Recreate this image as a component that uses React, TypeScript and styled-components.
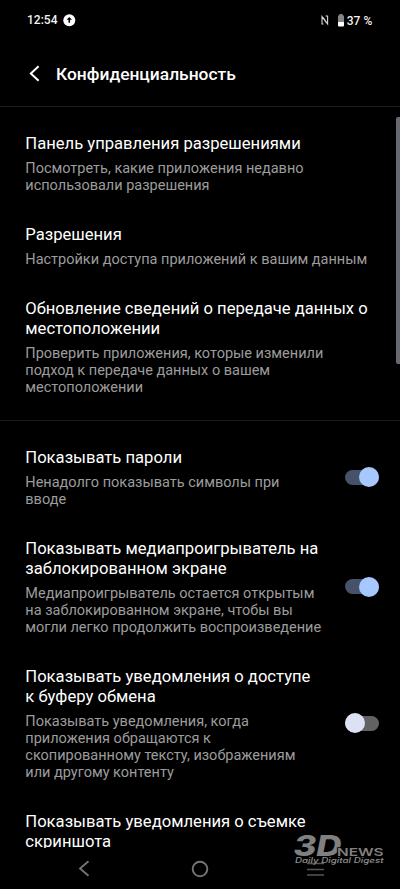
import React from "react";
import styled, { createGlobalStyle } from "styled-components";

const Global = createGlobalStyle`
  *, *::before, *::after { box-sizing: border-box; }
  html, body { margin: 0; padding: 0; background: #000; overflow: hidden; }
`;

const Screen = styled.main`
  position: relative;
  display: flex;
  flex-direction: column;
  width: 400px;
  height: 889px;
  overflow: hidden;
  background: #000;
  color: #fff;
  font-family: Roboto, "Noto Sans", sans-serif;
`;

const StatusBar = styled.div`
  display: flex;
  align-items: center;
  height: 40px;
  padding: 0 27.5px 0 27px;
  color: #f2f2f2;
  font-size: 12px;
  font-weight: 500;
  svg { display: block; }
`;

const Clock = styled.span`
  margin-right: 6px;
`;

const StatusIcons = styled.div`
  display: flex;
  align-items: center;
  margin-left: auto;
`;

const BatteryText = styled.span`
  margin-left: 3px;
  padding-top: 1px;
  letter-spacing: 0.1px;
  white-space: nowrap;
`;

const Header = styled.header`
  display: flex;
  align-items: center;
  gap: 16px;
  flex: none;
  height: 67px;
  padding-left: 29px;
  border-bottom: 1px solid #1c1c1c;
  svg { display: block; }
`;

const PageTitle = styled.h1`
  margin: 0;
  padding-top: 1px;
  font-size: 17.4px;
  font-weight: 500;
  line-height: 20px;
`;

const Content = styled.div`
  flex: none;
  height: 741px;
  overflow: hidden;
`;

const Section = styled.section<{ $divided?: boolean }>`
  display: flex;
  flex-direction: column;
  gap: 31.1px;
  padding: 26.5px 21px 24.1px 25.3px;
  border-bottom: ${(p) => (p.$divided ? "1px solid #1c1c1c" : "none")};
`;

const Row = styled.div`
  display: flex;
  align-items: center;
  justify-content: space-between;
`;

const Title = styled.div`
  font-size: 16.62px;
  line-height: 19.6px;
  white-space: pre;
`;

const Summary = styled.div`
  margin-top: 6.7px;
  color: #9c9c9c;
  font-size: 14.5px;
  line-height: 17px;
  white-space: pre;
`;

const Track = styled.div<{ $on: boolean }>`
  display: flex;
  flex: none;
  align-items: center;
  justify-content: ${(p) => (p.$on ? "flex-end" : "flex-start")};
  width: 34px;
  height: 15px;
  margin-bottom: 1.4px;
  border-radius: 8px;
  background: ${(p) => (p.$on ? "#455269" : "#626262")};
`;

const Thumb = styled.div<{ $on: boolean }>`
  flex: none;
  width: 20px;
  height: 20px;
  border-radius: 50%;
  background: ${(p) => (p.$on ? "#a6c8ff" : "#dce2f3")};
`;

const Scrollbar = styled.div`
  position: absolute;
  top: 117px;
  right: 0;
  width: 4px;
  height: 247px;
  border-radius: 2px 0 0 2px;
  background: #666a70;
`;

const NavBar = styled.nav`
  display: grid;
  grid-template-columns: 168px 64px 168px;
  align-items: center;
  justify-items: center;
  flex: none;
  height: 41px;
  svg { display: block; }
`;

const Watermark = styled.svg`
  position: absolute;
  left: 290px;
  top: 830px;
`;

type Item = { title: string; summary?: string; on?: boolean };

const links: Item[] = [
  { title: "Панель управления разрешениями", summary: "Посмотреть, какие приложения недавно\nиспользовали разрешения" },
  { title: "Разрешения", summary: "Настройки доступа приложений к вашим данным" },
  {
    title: "Обновление сведений о передаче данных о\nместоположении",
    summary: "Проверить приложения, которые изменили\nподход к передаче данных о вашем\nместоположении",
  },
];

const switches: Item[] = [
  { title: "Показывать пароли", summary: "Ненадолго показывать символы при\nвводе", on: true },
  {
    title: "Показывать медиапроигрыватель на\nзаблокированном экране",
    summary: "Медиапроигрыватель остается открытым\nна заблокированном экране, чтобы вы\nмогли легко продолжить воспроизведение",
    on: true,
  },
  {
    title: "Показывать уведомления о доступе\nк буферу обмена",
    summary: "Показывать уведомления, когда\nприложения обращаются к\nскопированному тексту, изображениям\nили другому контенту",
    on: false,
  },
  { title: "Показывать уведомления о съемке\nскриншота" },
];

function SettingRow({ title, summary, on }: Item) {
  return (
    <Row>
      <div>
        <Title>{title}</Title>
        {summary && <Summary>{summary}</Summary>}
      </div>
      {on !== undefined && (
        <Track $on={on} role="switch" aria-checked={on}>
          <Thumb $on={on} />
        </Track>
      )}
    </Row>
  );
}

export default function App() {
  return (
    <Screen>
      <Global />
      <StatusBar>
        <Clock>12:54</Clock>
        <svg width="13" height="13" viewBox="0 0 13 13">
          <circle cx="6.3" cy="6.2" r="6" fill="#fff" />
          <path d="M6.3 3 9 5.800H7.100V8.800H5.500V5.800H3.600z" fill="#000" />
        </svg>
        <StatusIcons>
          <svg width="9" height="11" viewBox="0 0 9 11">
            <path d="M3.500 9H2V1.500L6.500 8M5.500 1H7.600V9L3.200 2.500" fill="none" stroke="#d8d8d8" strokeWidth="1.100" />
          </svg>
          <svg width="15" height="13" viewBox="0 0 15 13">
            <path d="M10.500 0h3v1q1.500 0 1.500 1.500v6H9v-6Q9 1 10.500 1z" fill="#858585" />
            <path d="M9 8h6v3.500q0 1-1 1h-4q-1 0-1-1z" fill="#fff" />
          </svg>
          <BatteryText>37 %</BatteryText>
        </StatusIcons>
      </StatusBar>
      <Header>
        <svg width="11" height="17" viewBox="0 0 11 17">
          <path d="M9.6 1.2 1.8 8.5l7.8 7.3" fill="none" stroke="#fff" strokeWidth="2" />
        </svg>
        <PageTitle>Конфиденциальность</PageTitle>
      </Header>
      <Content>
        <Section $divided>
          {links.map((i) => <SettingRow key={i.title} {...i} />)}
        </Section>
        <Section>
          {switches.map((i) => <SettingRow key={i.title} {...i} />)}
        </Section>
      </Content>
      <NavBar>
        <svg width="12" height="17" viewBox="0 0 12 17">
          <path d="M10.5 1.2 2 8.5l8.500 7.300" fill="none" stroke="#757575" strokeWidth="1.8" />
        </svg>
        <svg width="18" height="18" viewBox="0 0 18 18">
          <circle cx="9" cy="9" r="7.3" fill="none" stroke="#757575" strokeWidth="1.9" />
        </svg>
        <svg width="18" height="16" viewBox="0 0 18 16">
          <path d="M0 2.500h17M0 8.500h17M0 14h17" stroke="#555" strokeWidth="1.3" />
        </svg>
      </NavBar>
      <Scrollbar />
      <Watermark width="100" height="40" viewBox="0 0 100 40" fill="#808080">
        <text x="3.500" y="26" fontFamily="Inter" fontWeight="800" fontStyle="italic" fontSize="28" textLength="48" lengthAdjust="spacingAndGlyphs">3D</text>
        <text x="47" y="26" fontFamily="Inter" fontWeight="600" fontSize="10.800" textLength="46.500" lengthAdjust="spacingAndGlyphs" stroke="#000" strokeWidth="1.500" paintOrder="stroke">NEWS</text>
        <text x="5" y="33" fontFamily="Inter" fontWeight="500" fontStyle="italic" fontSize="7.200" textLength="88.500" lengthAdjust="spacingAndGlyphs" fill="#909090">Daily Digital Digest</text>
      </Watermark>
    </Screen>
  );
}
